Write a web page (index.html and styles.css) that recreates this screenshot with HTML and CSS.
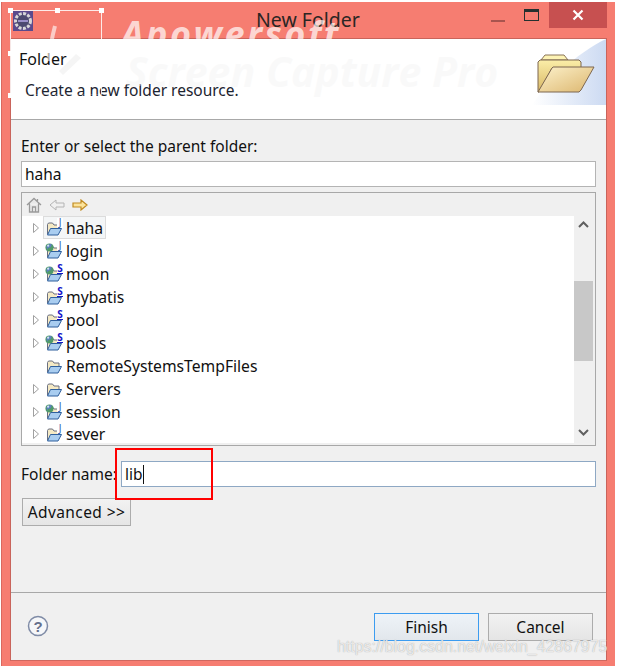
FILE: index.html
```html
<!DOCTYPE html>
<html lang="en">
<head>
    <meta charset="UTF-8">
    <title>New Folder</title>
    <link rel="stylesheet" href="styles.css">
</head>
<body>
    <svg class="defs" width="0" height="0">
        <symbol id="folder" viewBox="0 0 16 14">
            <path d="M1.500 12V2.500l1-1.500h4l1.500 2h5v3" fill="#f4e9c4" stroke="#6a6f80"/>
            <path d="M1.500 13l3-6.500h11L12 13z" fill="#a9cdf0" stroke="#2f5f9c"/>
        </symbol>
        <symbol id="globe" viewBox="0 0 10 10">
            <circle cx="5" cy="5" r="4.500" fill="#4f9a6a"/>
            <path d="M1.500 3.500c2-2 4-3 6-2l-1 3-3 1-1 2z" fill="#5d7fc0"/>
            <circle cx="3.500" cy="3" r="1.200" fill="#cfe3ef"/>
        </symbol>
        <symbol id="arrow" viewBox="0 0 8 12">
            <path d="M1.500 1.500l5 4.500-5 4.500z" fill="#fff" stroke="#a0a0a0"/>
        </symbol>
    </svg>

    <div class="window">
        <!-- Title bar -->
        <header class="titlebar">
            <span class="title">New Folder</span>
            <svg class="app-icon" width="20" height="20" viewBox="0 0 20 20">
                <rect width="20" height="20" fill="#5a4a8c"/>
                <circle cx="10" cy="10" r="7.500" fill="#4c4a70" stroke="#d8d8d8" stroke-width="3" stroke-dasharray="3 1.400"/>
                <path d="M5 10h10" stroke="#9a90c8" stroke-width="2"/>
            </svg>
            <div class="controls">
                <span class="btn-min"></span>
                <span class="btn-max"></span>
                <span class="btn-close">
                    <svg width="12" height="12" viewBox="0 0 12 12"><path d="M1.500 1.500l9 9M10.500 1.500l-9 9" stroke="#fff" stroke-width="2.200"/></svg>
                </span>
            </div>
        </header>

        <div class="client">
            <!-- Banner -->
            <section class="banner">
                <div class="banner-text">
                    <h1>Folder</h1>
                    <p>Create a new folder resource.</p>
                </div>
                <div class="banner-art">
                    <svg width="74" height="66" viewBox="0 0 74 66">
                        <defs>
                            <linearGradient id="wash" x1="0" y1="0" x2="1" y2="0">
                                <stop offset="0" stop-color="#fff"/>
                                <stop offset="1" stop-color="#ccdaf2"/>
                            </linearGradient>
                            <linearGradient id="back" x1="0" y1="0" x2="0" y2="1">
                                <stop offset="0" stop-color="#fbeea8"/>
                                <stop offset="1" stop-color="#d8b766"/>
                            </linearGradient>
                            <linearGradient id="front" x1="0" y1="0" x2="1" y2="1">
                                <stop offset="0" stop-color="#fdf2cc"/>
                                <stop offset="1" stop-color="#dcb66e"/>
                            </linearGradient>
                        </defs>
                        <path d="M0 66C14 44 44 14 74 0V66z" fill="url(#wash)"/>
                        <path d="M9 21l4-5h19l4 5z" fill="#fdf3b4" stroke="#8a7458"/>
                        <path d="M6 53V23l2-2h39l2 2v6H20L7 53z" fill="url(#back)" stroke="#7d6750"/>
                        <path d="M6 53L20 29l1-1h41L49 51l-2 2z" fill="url(#front)" stroke="#7d6750"/>
                    </svg>
                </div>
            </section>

            <!-- Form -->
            <section class="form">
                <label class="parent-label">Enter or select the parent folder:</label>
                <div class="field parent-field">haha</div>

                <div class="tree-box">
                    <div class="tree-tools">
                        <svg width="16" height="16" viewBox="0 0 16 16"><path d="M1 8l7-6.500L15 8M3.500 6.500V15h9V6.500M6.500 15v-5h3v5M11.500 2v3" fill="#e8e8e8" stroke="#9a9a9a" stroke-width="1.300"/></svg>
                        <svg width="16" height="12" viewBox="0 0 16 12"><path d="M1 6l6-5v3h8v4H7v3z" fill="#f0f0f0" stroke="#b4b4b4"/></svg>
                        <svg width="16" height="12" viewBox="0 0 16 12"><path d="M15 6L9 1v3H1v4h8v3z" fill="#fce39a" stroke="#c08a20" stroke-width="1.200"/></svg>
                    </div>
                    <div class="tree-body">
                        <ul class="tree">
                            <li class="row"><svg class="arrow"><use href="#arrow"/></svg><span class="item selected"><span class="icon"><svg class="fld"><use href="#folder"/></svg><b class="tag tag-j">J</b></span><span class="name">haha</span></span></li>
                            <li class="row"><svg class="arrow"><use href="#arrow"/></svg><span class="item"><span class="icon"><svg class="fld"><use href="#folder"/></svg><svg class="globe"><use href="#globe"/></svg><b class="tag tag-j">J</b></span><span class="name">login</span></span></li>
                            <li class="row"><svg class="arrow"><use href="#arrow"/></svg><span class="item"><span class="icon"><svg class="fld"><use href="#folder"/></svg><svg class="globe"><use href="#globe"/></svg><b class="tag tag-s">S</b></span><span class="name">moon</span></span></li>
                            <li class="row"><svg class="arrow"><use href="#arrow"/></svg><span class="item"><span class="icon"><svg class="fld"><use href="#folder"/></svg><b class="tag tag-s">S</b></span><span class="name">mybatis</span></span></li>
                            <li class="row"><svg class="arrow"><use href="#arrow"/></svg><span class="item"><span class="icon"><svg class="fld"><use href="#folder"/></svg><b class="tag tag-s">S</b></span><span class="name">pool</span></span></li>
                            <li class="row"><svg class="arrow"><use href="#arrow"/></svg><span class="item"><span class="icon"><svg class="fld"><use href="#folder"/></svg><svg class="globe"><use href="#globe"/></svg><b class="tag tag-s">S</b></span><span class="name">pools</span></span></li>
                            <li class="row"><svg class="arrow"></svg><span class="item"><span class="icon"><svg class="fld"><use href="#folder"/></svg></span><span class="name">RemoteSystemsTempFiles</span></span></li>
                            <li class="row"><svg class="arrow"><use href="#arrow"/></svg><span class="item"><span class="icon"><svg class="fld"><use href="#folder"/></svg></span><span class="name">Servers</span></span></li>
                            <li class="row"><svg class="arrow"><use href="#arrow"/></svg><span class="item"><span class="icon"><svg class="fld"><use href="#folder"/></svg><svg class="globe"><use href="#globe"/></svg><b class="tag tag-j">J</b></span><span class="name">session</span></span></li>
                            <li class="row row-last"><svg class="arrow"><use href="#arrow"/></svg><span class="item"><span class="icon"><svg class="fld"><use href="#folder"/></svg><b class="tag tag-j">J</b></span><span class="name">sever</span></span></li>
                        </ul>
                        <div class="scrollbar">
                            <svg class="sb-arrow" width="11" height="7" viewBox="0 0 11 7"><path d="M1 6l4.500-4.500L10 6" fill="none" stroke="#606060" stroke-width="2"/></svg>
                            <div class="sb-track"><div class="sb-thumb"></div></div>
                            <svg class="sb-arrow" width="11" height="7" viewBox="0 0 11 7"><path d="M1 1l4.500 4.500L10 1" fill="none" stroke="#606060" stroke-width="2"/></svg>
                        </div>
                    </div>
                </div>

                <div class="name-row">
                    <label>Folder name:</label>
                    <div class="field name-field">lib<span class="caret"></span></div>
                </div>

                <button class="btn btn-advanced">Advanced &gt;&gt;</button>
            </section>

            <!-- Footer -->
            <footer class="footer">
                <svg class="help" width="22" height="22" viewBox="0 0 22 22">
                    <circle cx="11" cy="11" r="9.500" fill="#f6f7f9" stroke="#7f8ba6" stroke-width="1.500"/>
                    <text x="11" y="16.500" text-anchor="middle" class="help-mark">?</text>
                </svg>
                <div class="footer-buttons">
                    <button class="btn btn-finish">Finish</button>
                    <button class="btn btn-cancel">Cancel</button>
                </div>
            </footer>
        </div>
    </div>

    <!-- Things lying over the window: capture tool overlay, annotation, watermark -->
    <div class="capture-box">
        <svg class="feather" width="44" height="70" viewBox="0 0 44 70">
            <path d="M14 15C11 26 9 38 8 50" fill="none" stroke="#fff" stroke-width="4" opacity="0.6"/>
            <path d="M40 47L22 64l-4-4 17-17z" fill="#f2f2f2" opacity="0.8"/>
        </svg>
        <i class="handle h1"></i><i class="handle h2"></i><i class="handle h3"></i>
        <i class="handle h4"></i><i class="handle h5"></i>
    </div>
    <div class="mark mark-brand">Apowersoft</div>
    <div class="mark mark-product">Screen Capture Pro</div>
    <div class="red-box"></div>
    <div class="csdn">https://blog.csdn.net/weixin_42867975</div>
</body>
</html>
```

FILE: styles.css
```css
* {
    box-sizing: border-box;
}

html, body {
    margin: 0;
    height: 100%;
    overflow: hidden;
}

body {
    position: relative;
    background: white;
    font-family: "Noto Sans", "Open Sans", sans-serif;
    font-size: 15.500px;
    color: #111;
}

.defs {
    position: absolute;
}

/* Window frame */
.window {
    display: flex;
    flex-direction: column;
    width: 614px;
    height: 664px;
    margin: 2px 0 0 1px;
    padding: 0 8px 5px 8px;
    background: #F67D71;
    border-left: 1px solid #d9695f;
}

/* Title bar */
.titlebar {
    position: relative;
    display: flex;
    align-items: flex-start;
    flex: none;
    height: 36px;
}

.title {
    position: absolute;
    left: 246px;
    top: 4px;
    font-size: 19.500px;
    color: #2b2624;
}

.app-icon {
    position: absolute;
    left: 3px;
    top: 9px;
}

.controls {
    display: flex;
    margin-left: auto;
    height: 26px;
}

.btn-min {
    width: 14px;
    height: 2px;
    margin-top: 18px;
    margin-right: 19px;
    background: #a9544e;
}

.btn-max {
    width: 15px;
    height: 12px;
    margin-top: 7px;
    margin-right: 10px;
    border: 1px solid #25302f;
    border-top-width: 3px;
}

.btn-close {
    display: flex;
    align-items: center;
    justify-content: center;
    width: 58px;
    background: #C75050;
}

/* Client area */
.client {
    display: flex;
    flex-direction: column;
    flex: 1;
    background: #F0F0F0;
    border: 1px solid #c9645b;
    border-bottom-color: #d0685f;
}

.banner {
    display: flex;
    justify-content: space-between;
    flex: none;
    height: 81px;
    background: white;
    border-bottom: 1px solid #a8a8a8;
}

.banner-text h1 {
    margin: 9px 0 0 8px;
    font-size: 16px;
    font-weight: normal;
    color: #111;
}

.banner-text p {
    margin: 9px 0 0 14px;
    color: #1c2430;
}

.banner-art {
    height: 66px;
}

/* Form */
.form {
    display: flex;
    flex-direction: column;
    align-items: flex-start;
    flex: none;
    height: 473px;
    padding: 15px 10px 0 10px;
    border-bottom: 1px solid #a8a8a8;
}

.parent-label {
    height: 26px;
    line-height: 22px;
}

.field {
    height: 26px;
    padding-left: 3px;
    line-height: 24px;
    background: white;
    border: 1px solid #b4b4b4;
}

.parent-field {
    width: 575px;
}

.tree-box {
    width: 575px;
    height: 254px;
    margin-top: 5px;
    border: 1px solid #a8a8a8;
    background: #F0F0F0;
}

.tree-tools {
    display: flex;
    align-items: center;
    gap: 7px;
    height: 23px;
    padding-left: 4px;
}

.tree-body {
    display: flex;
    height: 229px;
}

.tree {
    flex: none;
    width: 552px;
    height: 229px;
    margin: 0;
    padding: 0;
    overflow: hidden;
    list-style: none;
    background: linear-gradient(white 227px, #F0F0F0 227px);
}

.row {
    display: flex;
    align-items: center;
    height: 23px;
    padding-left: 10px;
}

.row-last {
    height: 22px;
}

.arrow {
    flex: none;
    width: 8px;
    height: 12px;
    margin-right: 3px;
}

.item {
    display: flex;
    align-items: center;
    height: 22px;
    padding: 0 3px 0 1px;
}

.selected {
    height: 23px;
    background: #f4f6f7;
    border: 1px solid #dcdcdc;
    padding: 0 2px 0 0;
}

.icon {
    position: relative;
    flex: none;
    width: 22px;
    height: 20px;
}

.fld {
    position: absolute;
    left: 2px;
    top: 4px;
    width: 16px;
    height: 14px;
}

.globe {
    position: absolute;
    left: 1px;
    top: 2px;
    width: 9px;
    height: 9px;
}

.tag {
    position: absolute;
    right: 3px;
    top: 0;
    width: 6px;
    height: 10px;
    font-size: 10px;
    line-height: 9px;
    text-align: center;
    font-weight: bold;
    background: white;
}

.tag-s {
    color: #1515c8;
    border-bottom: 1px solid #1515c8;
}

.tag-j {
    color: #2e62b0;
    font-weight: normal;
}

.name {
    line-height: 22px;
    font-size: 15.700px;
}

.scrollbar {
    display: flex;
    flex-direction: column;
    align-items: center;
    width: 19px;
    padding-top: 5px;
}

.sb-track {
    flex: 1;
    width: 100%;
    padding-top: 53px;
}

.sb-thumb {
    height: 80px;
    background: #C8C8C8;
}

.sb-arrow {
    flex: none;
}

.scrollbar .sb-arrow:last-child {
    margin-bottom: 9px;
}

/* Folder name row */
.name-row {
    display: flex;
    align-items: center;
    margin-top: 15px;
    width: 575px;
}

.name-row label {
    width: 100px;
    flex: none;
}

.name-field {
    flex: 1;
    border-color: #8ea8c4;
}

.caret {
    display: inline-block;
    width: 1px;
    height: 19px;
    vertical-align: -4px;
    background: #111;
}

/* Buttons */
.btn {
    height: 28px;
    padding: 0;
    font-family: inherit;
    font-size: 15.500px;
    color: #111;
    background: linear-gradient(#f2f2f2, #e5e5e5);
    border: 1px solid #acacac;
}

.btn-advanced {
    width: 109px;
    margin: 11px 0 0 1px;
    letter-spacing: 0.4px;
}

.footer {
    display: flex;
    align-items: flex-start;
    justify-content: space-between;
    flex: 1;
    padding: 20px 13px 0 15px;
}

.help {
    margin-top: 2px;
    margin-left: 1px;
}

.help-mark {
    font-family: "Liberation Sans", sans-serif;
    font-size: 15px;
    font-weight: bold;
    fill: #66708c;
}

.footer-buttons {
    display: flex;
    gap: 9px;
}

.footer-buttons .btn {
    width: 105px;
}

.btn-finish {
    background: linear-gradient(#eef3f8, #e2e7ec);
    border-color: #3c9cf0;
}

/* Overlays */
.capture-box {
    position: absolute;
    left: 10px;
    top: 10px;
    width: 92px;
    height: 85px;
    border: 1px solid rgba(255, 255, 255, 0.85);
    border-bottom-color: rgba(255, 255, 255, 0.2);
    pointer-events: none;
}

.feather {
    position: absolute;
    left: 30px;
    top: 0;
}

.handle {
    position: absolute;
    width: 5px;
    height: 5px;
    background: white;
}

.h1 { left: -3px; top: -3px; }
.h2 { left: 44px; top: -3px; }
.h3 { right: -3px; top: -3px; }
.h4 { left: -3px; top: 40px; }
.h5 { left: -3px; top: 82px; }

.mark {
    position: absolute;
    font-family: "Open Sans", sans-serif;
    font-style: italic;
    font-weight: 700;
    white-space: nowrap;
}

.mark-brand {
    left: 121px;
    top: 9px;
    font-size: 36px;
    letter-spacing: 2.500px;
    color: rgba(255, 255, 255, 0.7);
}

.mark-product {
    left: 126px;
    top: 43px;
    font-size: 41px;
    color: rgba(244, 244, 244, 0.5);
}

.red-box {
    position: absolute;
    left: 115px;
    top: 448px;
    width: 98px;
    height: 52px;
    border: 2px solid #F00;
}

.csdn {
    position: absolute;
    left: 337px;
    top: 638px;
    font-family: "Liberation Sans", sans-serif;
    font-size: 15.900px;
    color: rgba(255, 255, 255, 0.75);
    text-shadow: 0 0 1px #999;
    white-space: nowrap;
}
```
